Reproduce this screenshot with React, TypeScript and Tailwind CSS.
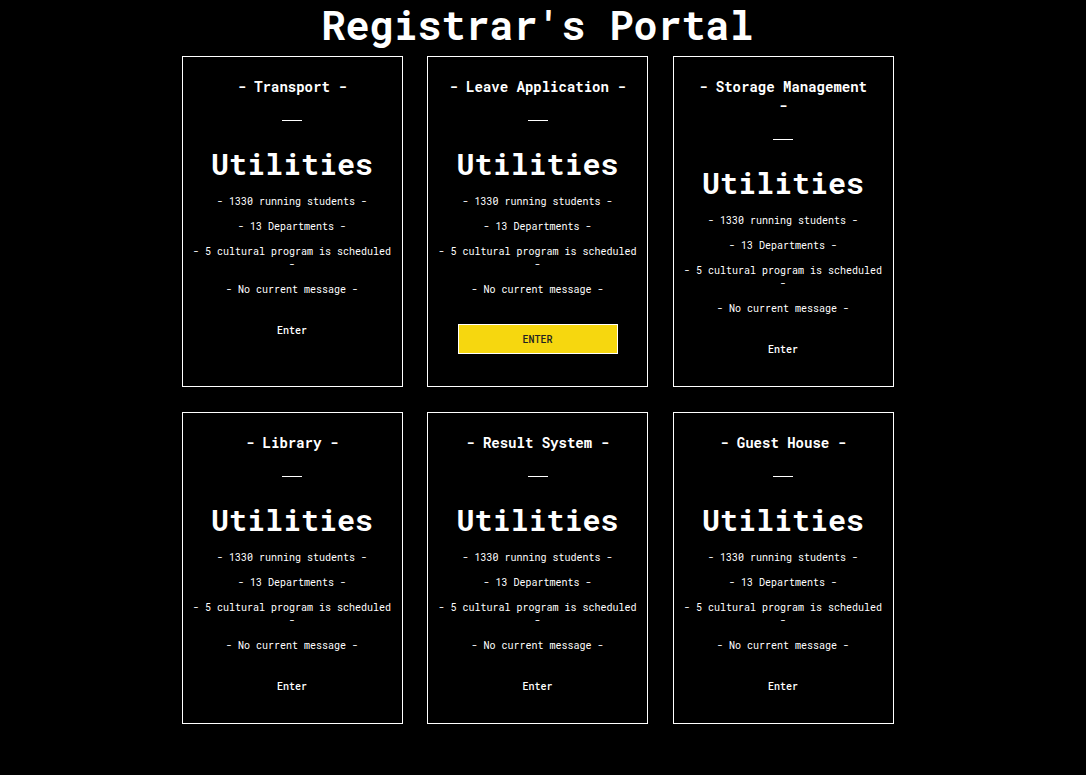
const CARDS = [
  { title: "Transport" },
  { title: "Leave Application", active: true },
  { title: "Storage Management" },
  { title: "Library" },
  { title: "Result System" },
  { title: "Guest House" },
];

const STATS = [
  "- 1330 running students -",
  "- 13 Departments -",
  "- 5 cultural program is scheduled -",
  "- No current message -",
];

function Card({ title, active }: { title: string; active?: boolean }) {
  return (
    <div className="flex w-[221px] flex-col items-center border border-white px-[10px] pt-[20px] pb-[22px] text-center text-white">
      <h3 className="px-[10px] text-[14px] font-bold leading-[19px]">- {title} -</h3>
      <div className="mt-[24px] h-px w-[20px] bg-white" />
      <h2 className="mt-[25px] text-[30px] font-bold leading-[36px]">Utilities</h2>
      <div className="mt-[13px] flex flex-col gap-[12px]">
        {STATS.map((s) => (
          <p key={s} className="text-[10px] leading-[13px]">
            {s}
          </p>
        ))}
      </div>
      {active ? (
        <button className="mt-[28px] h-[30px] w-[160px] border border-white bg-[#f6d70f] text-[10px] font-medium text-[#222]">
          ENTER
        </button>
      ) : (
        <button className="mt-[19px] h-[30px] w-[160px] text-[10px] font-medium text-white">Enter</button>
      )}
    </div>
  );
}

export default function App() {
  return (
    <div
      className="flex min-h-[775px] flex-col items-center bg-black pr-[11px]"
      style={{ fontFamily: '"Roboto Mono", "DejaVu Sans Mono", "Liberation Mono", monospace' }}
    >
      <h1 className="text-[40px] font-bold leading-[50px] text-white">Registrar's Portal</h1>
      <div className="mt-[6px] grid grid-cols-[repeat(3,221px)] gap-x-[24.5px] gap-y-[25px]">
        {CARDS.map((c) => (
          <Card key={c.title} title={c.title} active={c.active} />
        ))}
      </div>
    </div>
  );
}
